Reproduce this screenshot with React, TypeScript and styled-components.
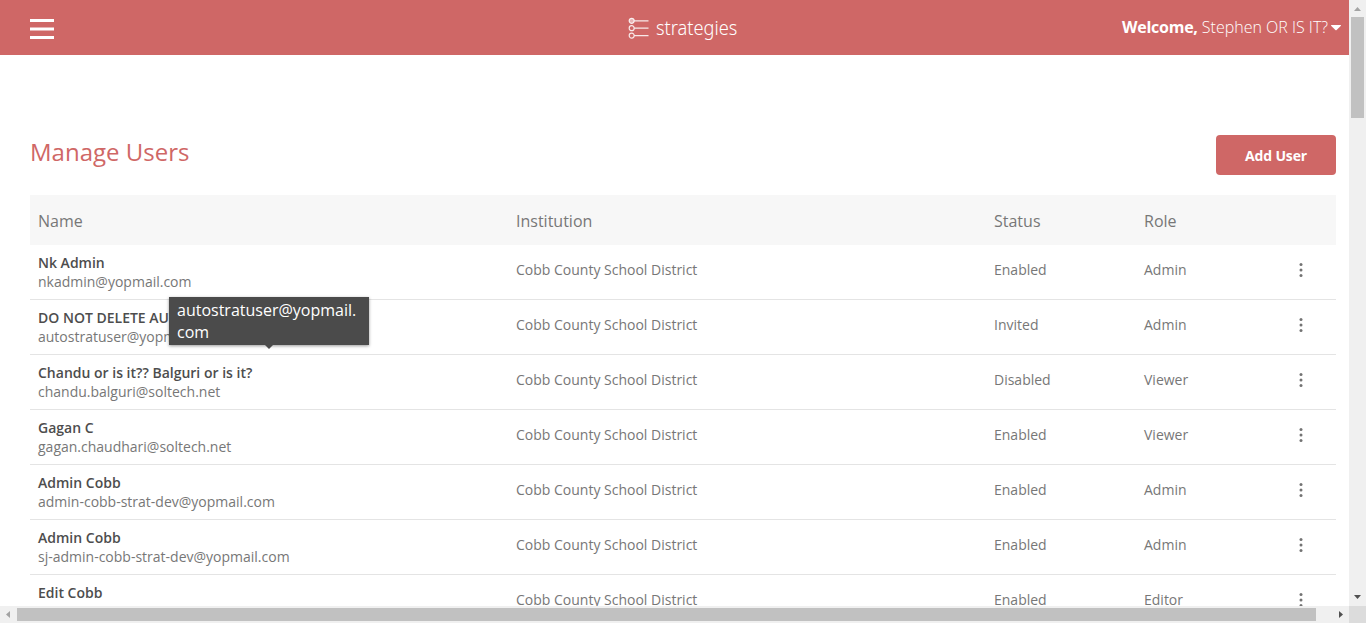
import React from 'react';
import styled, { createGlobalStyle } from 'styled-components';

const GlobalStyle = createGlobalStyle`
  * { box-sizing: border-box; }
  html, body { margin: 0; padding: 0; overflow: hidden; }
  body { font-family: "Open Sans", "Noto Sans", sans-serif; background: #fff; color: #777; }
`;

const Window = styled.div`
  display: grid;
  grid-template-columns: 1fr 17px;
  grid-template-rows: 1fr 17px;
  width: 100vw;
  height: 100vh;
  overflow: hidden;
`;

const Viewport = styled.div`
  min-width: 0;
  min-height: 0;
  overflow: hidden;
`;

const Header = styled.header`
  display: grid;
  grid-template-columns: 1fr 110px 1fr;
  align-items: center;
  height: 55px;
  padding: 0 8px 0 30px;
  background: #cf6766;
  color: #fff;
`;

const MenuButton = styled.button`
  display: flex;
  width: 24px;
  padding: 3px 0 0;
  border: 0;
  background: none;
`;

const Brand = styled.div`
  display: flex;
  align-items: center;
  gap: 6px;
  margin-left: -2.5px;
  height: 55px;
  svg { flex: none; margin-top: 1px; }
`;

const BrandName = styled.span`
  font-family: "Noto Sans", "Open Sans", sans-serif;
  font-size: 20px;
  font-weight: 300;
  line-height: 26px;
  white-space: nowrap;
  transform: scaleX(0.91);
  transform-origin: left center;
`;

const Account = styled.div`
  display: flex;
  align-items: center;
  justify-content: flex-end;
  padding-bottom: 2px;
  font-size: 16px;
  font-weight: 300;
  line-height: 22px;
  white-space: pre;
  b { font-weight: 700; letter-spacing: -0.25px; }
  svg { margin: 3px 0 0 3px; }
`;

const Main = styled.main`
  padding: 80px 13px 0 30px;
`;

const TitleBar = styled.div`
  display: flex;
  justify-content: space-between;
  height: 60px;
`;

const Title = styled.h1`
  margin: 0;
  font-size: 24px;
  font-weight: 400;
  line-height: 34px;
  color: #cf6766;
`;

const AddButton = styled.button`
  width: 120px;
  height: 40px;
  padding: 2px 0 0;
  border: 0;
  border-radius: 4px;
  background: #cf6766;
  color: #fff;
  font: 700 14px/20px "Open Sans", sans-serif;
  letter-spacing: -0.15px;
`;

const Row = styled.div`
  display: grid;
  grid-template-columns: 478px 478px 150px 150px 50px;
  height: 55px;
  border-bottom: 1px solid #e4e4e4;
  font-size: 14px;
  line-height: 19px;
`;

const HeadRow = styled(Row)`
  height: 50px;
  border: 0;
  background: #f7f7f7;
  font-size: 16px;
  line-height: 22px;
`;

const Cell = styled.div<{ $top: number }>`
  padding: ${(p) => p.$top}px 8px 0;
  white-space: nowrap;
`;

const UserName = styled.div`
  font-weight: 600;
  color: #4d4d4d;
`;

const RowMenu = styled.div`
  padding: 17px 0 0 12px;
  svg { display: block; }
`;

const Tooltip = styled.div`
  position: absolute;
  left: 169px;
  top: 297px;
  width: 200px;
  height: 48px;
  padding: 2px 8px;
  background: #4b4b4b;
  color: #fff;
  font-size: 16px;
  line-height: 22px;
  box-shadow: 0 1px 3px rgba(0, 0, 0, 0.4);
  &::after {
    content: "";
    position: absolute;
    left: 96px;
    top: 48px;
    border: 4px solid transparent;
    border-top-color: #4b4b4b;
    border-bottom: 0;
  }
`;

const Track = styled.div<{ $vertical?: boolean }>`
  display: flex;
  flex-direction: ${(p) => (p.$vertical ? 'column' : 'row')};
  align-items: center;
  background: #f0f0f0;
  min-width: 0;
  min-height: 0;
`;

const Arrow = styled.svg`
  display: block;
  flex: none;
  width: 17px;
  height: 17px;
`;

const Thumb = styled.div<{ $w: number; $h: number }>`
  flex: none;
  width: ${(p) => p.$w}px;
  height: ${(p) => p.$h}px;
  background: #c1c1c1;
`;

const Spacer = styled.div`
  flex: 1;
`;

const Corner = styled.div`
  background: #dcdcdc;
`;

const users = [
  ['Nk Admin', 'nkadmin@yopmail.com', 'Enabled', 'Admin'],
  ['DO NOT DELETE AUTO', 'autostratuser@yopmail.com', 'Invited', 'Admin'],
  ['Chandu or is it?? Balguri or is it?', 'chandu.balguri@soltech.net', 'Disabled', 'Viewer'],
  ['Gagan C', 'gagan.chaudhari@soltech.net', 'Enabled', 'Viewer'],
  ['Admin Cobb', 'admin-cobb-strat-dev@yopmail.com', 'Enabled', 'Admin'],
  ['Admin Cobb', 'sj-admin-cobb-strat-dev@yopmail.com', 'Enabled', 'Admin'],
  ['Edit Cobb', '', 'Enabled', 'Editor'],
];

export default function App() {
  return (
    <Window>
      <GlobalStyle />
      <Viewport>
        <Header>
          <MenuButton aria-label="Menu">
            <svg width="24" height="20" viewBox="0 0 24 20" fill="#fff">
              <path d="M0 0h24v3H0zM0 8.5h24v3H0zM0 17h24v3H0z" />
            </svg>
          </MenuButton>
          <Brand>
            <svg width="22" height="22" viewBox="0 0 22 22" fill="none" stroke="#fff" strokeOpacity=".85" strokeWidth="1.2">
              <circle cx="3.7" cy="3.8" r="2.5" fill="#fff" fillOpacity=".5" />
              <circle cx="3.7" cy="11.2" r="2.5" />
              <circle cx="3.7" cy="18.6" r="2.5" />
              <path d="M6.3 3.8H20.5M6.3 11.2H20.5M6.3 18.6H20.5" />
            </svg>
            <BrandName>strategies</BrandName>
          </Brand>
          <Account>
            <b>Welcome,</b> Stephen OR IS IT?
            <svg width="10" height="6" viewBox="0 0 10 6" fill="#fff">
              <path d="M.4 0h9.2q.7.3.1 1L5.6 5.1q-.6.5-1.2 0L.3 1q-.6-.7.1-1z" />
            </svg>
          </Account>
        </Header>
        <Main>
          <TitleBar>
            <Title>Manage Users</Title>
            <AddButton>Add User</AddButton>
          </TitleBar>
          <HeadRow>
            <Cell $top={15}>Name</Cell>
            <Cell $top={15}>Institution</Cell>
            <Cell $top={15}>Status</Cell>
            <Cell $top={15}>Role</Cell>
          </HeadRow>
          {users.map(([name, email, status, role], i) => (
            <Row key={i}>
              <Cell $top={8}>
                <UserName>{name}</UserName>
                <div>{email}</div>
              </Cell>
              <Cell $top={15}>Cobb County School District</Cell>
              <Cell $top={15}>{status}</Cell>
              <Cell $top={15}>{role}</Cell>
              <RowMenu>
                <svg width="6" height="16" viewBox="0 0 6 16" fill="#737373">
                  <circle cx="3" cy="2.5" r="1.5" />
                  <circle cx="3" cy="8" r="1.5" />
                  <circle cx="3" cy="13.5" r="1.5" />
                </svg>
              </RowMenu>
            </Row>
          ))}
        </Main>
        <Tooltip>autostratuser@yopmail.<br />com</Tooltip>
      </Viewport>
      <Track $vertical>
        <Arrow viewBox="0 0 17 17" fill="#a3a3a3"><path d="M5 11h7L8.5 7z" /></Arrow>
        <Thumb $w={13} $h={101} />
        <Spacer />
        <Arrow viewBox="0 0 17 17" fill="#505050"><path d="M5 6h7L8.5 10z" /></Arrow>
      </Track>
      <Track>
        <Arrow viewBox="0 0 17 17" fill="#a3a3a3"><path d="M10 5v7L6 8.5z" /></Arrow>
        <Thumb $w={1299} $h={13} />
        <Spacer />
        <Arrow viewBox="0 0 17 17" fill="#505050"><path d="M7 5v7L11 8.5z" /></Arrow>
      </Track>
      <Corner />
    </Window>
  );
}
